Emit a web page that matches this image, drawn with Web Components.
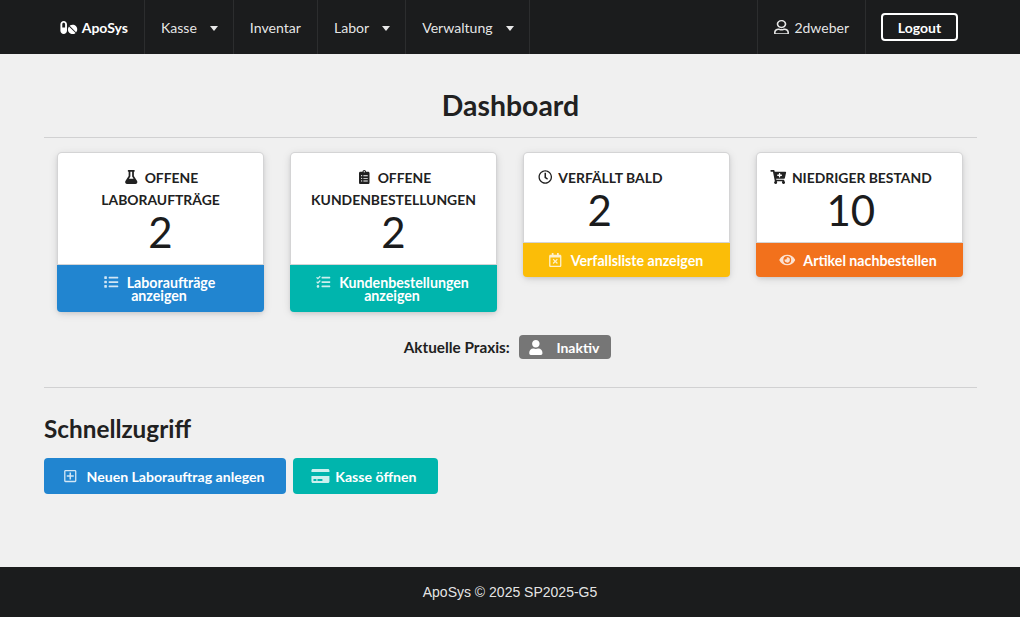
<!DOCTYPE html>
<html lang="de">
<head>
<meta charset="utf-8">
<title>ApoSys</title>
<style>
  html, body { margin: 0; height: 100%; }
  body { background: #f0f0f0; font-family: Lato, "Open Sans", sans-serif; font-size: 14.1px; color: #212121; }
  apo-app { display: flex; flex-direction: column; height: 617px; overflow: hidden; }
</style>
</head>
<body>
<apo-app>
  <apo-nav slot="nav"></apo-nav>
  <apo-dashboard></apo-dashboard>
  <apo-footer slot="footer">ApoSys © 2025 SP2025-G5</apo-footer>
</apo-app>

<script>
const ICONS = {
  pills: ["0 0 576 512", "M112 32C50.1 32 0 82.1 0 144v224c0 61.9 50.1 112 112 112s112-50.1 112-112V144c0-61.9-50.1-112-112-112zm48 224H64V144c0-26.5 21.5-48 48-48s48 21.5 48 48v112zm139.7-29.7c-3.5-3.5-9.4-3.1-12.3.8-45.3 62.5-40.4 150.1 15.9 206.4 56.3 56.3 143.9 61.2 206.4 15.9 4-2.9 4.3-8.8.8-12.3L299.7 226.3zm229.8-19c-56.3-56.3-143.9-61.2-206.4-15.9-4 2.9-4.3 8.8-.8 12.3l210.8 210.8c3.5 3.5 9.4 3.1 12.3-.8 45.3-62.6 40.5-150.1-15.9-206.4z"],
  flask: ["0 0 448 512", "M437.2 403.5L320 215V64h8c13.3 0 24-10.7 24-24V24c0-13.3-10.7-24-24-24H120c-13.3 0-24 10.7-24 24v16c0 13.3 10.7 24 24 24h8v151L10.8 403.5C-18.5 450.6 15.3 512 70.9 512h306.2c55.7 0 89.4-61.5 60.1-108.5zM137.9 320l48.2-77.6c3.7-5.2 5.8-11.6 5.8-18.4V64h64v160c0 6.9 2.2 13.2 5.8 18.4l48.2 77.6h-172z"],
  clipboard: ["0 0 384 512", "M336 64h-80c0-35.3-28.7-64-64-64s-64 28.7-64 64H48C21.5 64 0 85.5 0 112v352c0 26.5 21.5 48 48 48h288c26.5 0 48-21.5 48-48V112c0-26.5-21.5-48-48-48zM96 424c-13.3 0-24-10.7-24-24s10.7-24 24-24 24 10.7 24 24-10.7 24-24 24zm0-96c-13.3 0-24-10.7-24-24s10.7-24 24-24 24 10.7 24 24-10.7 24-24 24zm0-96c-13.3 0-24-10.7-24-24s10.7-24 24-24 24 10.7 24 24-10.7 24-24 24zm96-192c13.3 0 24 10.7 24 24s-10.7 24-24 24-24-10.7-24-24 10.7-24 24-24zm128 368c0 4.4-3.6 8-8 8H168c-4.4 0-8-3.6-8-8v-16c0-4.4 3.6-8 8-8h144c4.4 0 8 3.6 8 8v16zm0-96c0 4.4-3.6 8-8 8H168c-4.4 0-8-3.6-8-8v-16c0-4.4 3.6-8 8-8h144c4.4 0 8 3.6 8 8v16zm0-96c0 4.4-3.6 8-8 8H168c-4.4 0-8-3.6-8-8v-16c0-4.4 3.6-8 8-8h144c4.4 0 8 3.6 8 8v16z"],
  clock: ["0 0 512 512", "M256 8C119 8 8 119 8 256s111 248 248 248 248-111 248-248S393 8 256 8zm0 448c-110.5 0-200-89.5-200-200S145.5 56 256 56s200 89.5 200 200-89.5 200-200 200zm61.8-104.4l-84.9-61.7c-3.1-2.3-4.9-5.9-4.9-9.7V116c0-6.6 5.4-12 12-12h32c6.6 0 12 5.4 12 12v141.7l66.8 48.6c5.4 3.9 6.5 11.4 2.6 16.8L334.6 349c-3.9 5.3-11.4 6.5-16.8 2.6z"],
  cart: ["0 0 576 512", "M504.717 320H211.572l6.545 32h268.418c15.401 0 26.816 14.301 23.403 29.319l-5.517 24.276C523.112 414.668 536 433.828 536 456c0 31.202-25.519 56.444-56.824 55.994-29.823-.429-54.35-24.631-55.155-54.447-.44-16.287 6.085-31.049 16.803-41.548H231.176C241.553 426.165 248 440.326 248 456c0 31.813-26.528 57.431-58.67 55.938-28.54-1.325-51.751-24.385-53.251-52.917-1.158-22.034 10.436-41.455 28.051-51.586L93.883 64H24C10.745 64 0 53.255 0 40V24C0 10.745 10.745 0 24 0h102.529c11.401 0 21.228 8.021 23.513 19.19L159.208 64H551.99c15.401 0 26.816 14.301 23.403 29.319l-47.273 208C525.637 312.246 515.923 320 504.717 320zM408 168h-48v-40c0-8.837-7.163-16-16-16h-16c-8.837 0-16 7.163-16 16v40h-48c-8.837 0-16 7.163-16 16v16c0 8.837 7.163 16 16 16h48v40c0 8.837 7.163 16 16 16h16c8.837 0 16-7.163 16-16v-40h48c8.837 0 16-7.163 16-16v-16c0-8.837-7.163-16-16-16z"],
  list: ["0 0 512 512", "M80 368H16a16 16 0 0 0-16 16v64a16 16 0 0 0 16 16h64a16 16 0 0 0 16-16v-64a16 16 0 0 0-16-16zm0-320H16A16 16 0 0 0 0 64v64a16 16 0 0 0 16 16h64a16 16 0 0 0 16-16V64a16 16 0 0 0-16-16zm0 160H16a16 16 0 0 0-16 16v64a16 16 0 0 0 16 16h64a16 16 0 0 0 16-16v-64a16 16 0 0 0-16-16zm416 176H176a16 16 0 0 0-16 16v32a16 16 0 0 0 16 16h320a16 16 0 0 0 16-16v-32a16 16 0 0 0-16-16zm0-320H176a16 16 0 0 0-16 16v32a16 16 0 0 0 16 16h320a16 16 0 0 0 16-16V80a16 16 0 0 0-16-16zm0 160H176a16 16 0 0 0-16 16v32a16 16 0 0 0 16 16h320a16 16 0 0 0 16-16v-32a16 16 0 0 0-16-16z"],
  tasks: ["0 0 512 512", "M139.61 35.5a12 12 0 0 0-17 0L58.93 98.81l-22.7-22.12a12 12 0 0 0-17 0L3.53 92.41a12 12 0 0 0 0 17l47.59 47.4a12.78 12.78 0 0 0 17.61 0l15.59-15.62L156.52 69a12.09 12.09 0 0 0 .09-17zm0 159.19a12 12 0 0 0-17 0l-63.68 63.72-22.7-22.1a12 12 0 0 0-17 0L3.53 252a12 12 0 0 0 0 17L51 316.5a12.77 12.77 0 0 0 17.6 0l15.7-15.69 72.2-72.22a12 12 0 0 0 .09-16.9zM64 368c-26.49 0-48.59 21.5-48.59 48S37.53 464 64 464a48 48 0 0 0 0-96zm432 16H208a16 16 0 0 0-16 16v32a16 16 0 0 0 16 16h288a16 16 0 0 0 16-16v-32a16 16 0 0 0-16-16zm0-320H208a16 16 0 0 0-16 16v32a16 16 0 0 0 16 16h288a16 16 0 0 0 16-16V80a16 16 0 0 0-16-16zm0 160H208a16 16 0 0 0-16 16v32a16 16 0 0 0 16 16h288a16 16 0 0 0 16-16v-32a16 16 0 0 0-16-16z"],
  calendar: ["0 0 448 512", "M311.7 374.7l-17 17c-4.7 4.7-12.3 4.7-17 0L224 337.9l-53.7 53.7c-4.7 4.7-12.3 4.7-17 0l-17-17c-4.7-4.7-4.7-12.3 0-17l53.7-53.7-53.7-53.7c-4.7-4.7-4.7-12.3 0-17l17-17c4.7-4.7 12.3-4.7 17 0l53.7 53.7 53.7-53.7c4.7-4.7 12.3-4.7 17 0l17 17c4.7 4.7 4.7 12.3 0 17L257.9 304l53.7 53.7c4.8 4.7 4.8 12.3.1 17zM448 112v352c0 26.5-21.5 48-48 48H48c-26.5 0-48-21.5-48-48V112c0-26.5 21.5-48 48-48h48V12c0-6.6 5.4-12 12-12h40c6.6 0 12 5.4 12 12v52h128V12c0-6.6 5.4-12 12-12h40c6.6 0 12 5.4 12 12v52h48c26.5 0 48 21.5 48 48zm-48 346V160H48v298c0 3.3 2.7 6 6 6h340c3.3 0 6-2.7 6-6z"],
  eye: ["0 0 576 512", "M572.52 241.4C518.29 135.59 410.93 64 288 64S57.68 135.64 3.48 241.41a32.35 32.35 0 0 0 0 29.19C57.71 376.41 165.07 448 288 448s230.32-71.64 284.52-177.41a32.35 32.35 0 0 0 0-29.19zM288 400a144 144 0 1 1 144-144 143.93 143.93 0 0 1-144 144zm0-240a95.31 95.31 0 0 0-25.31 3.79 47.85 47.85 0 0 1-66.9 66.9A95.78 95.78 0 1 0 288 160z"],
  user: ["0 0 448 512", "M224 256c70.7 0 128-57.3 128-128S294.7 0 224 0 96 57.3 96 128s57.3 128 128 128zm89.6 32h-16.7c-22.2 10.2-46.9 16-72.9 16s-50.6-5.8-72.9-16h-16.7C60.2 288 0 348.2 0 422.4V464c0 26.5 21.5 48 48 48h352c26.5 0 48-21.5 48-48v-41.6c0-74.2-60.2-134.4-134.4-134.4z"],
  userOutline: ["0 0 448 512", "M313.6 304c-28.7 0-42.5 16-89.6 16-47.1 0-60.8-16-89.6-16C60.2 304 0 364.2 0 438.4V464c0 26.5 21.5 48 48 48h352c26.5 0 48-21.5 48-48v-25.6c0-74.2-60.2-134.4-134.4-134.4zM400 464H48v-25.6c0-47.6 38.8-86.4 86.4-86.4 14.6 0 38.3 16 89.6 16 51.7 0 74.9-16 89.6-16 47.6 0 86.4 38.8 86.4 86.4V464zM224 288c79.5 0 144-64.5 144-144S303.5 0 224 0 80 64.5 80 144s64.5 144 144 144zm0-240c52.9 0 96 43.1 96 96s-43.1 96-96 96-96-43.1-96-96 43.1-96 96-96z"],
  plusSquare: ["0 0 448 512", "M352 240v32c0 6.6-5.4 12-12 12h-88v88c0 6.6-5.4 12-12 12h-32c-6.6 0-12-5.4-12-12v-88h-88c-6.6 0-12-5.4-12-12v-32c0-6.6 5.4-12 12-12h88v-88c0-6.6 5.4-12 12-12h32c6.6 0 12 5.4 12 12v88h88c6.6 0 12 5.4 12 12zm96-160v352c0 26.5-21.5 48-48 48H48c-26.5 0-48-21.5-48-48V80c0-26.5 21.5-48 48-48h352c26.5 0 48 21.5 48 48zm-48 346V86c0-3.3-2.7-6-6-6H54c-3.3 0-6 2.7-6 6v340c0 3.3 2.7 6 6 6h340c3.3 0 6-2.7 6-6z"],
  card: ["0 0 576 512", "M0 432c0 26.5 21.5 48 48 48h480c26.5 0 48-21.5 48-48V256H0v176zm192-68c0-6.6 5.4-12 12-12h136c6.6 0 12 5.4 12 12v40c0 6.6-5.4 12-12 12H204c-6.6 0-12-5.4-12-12v-40zm-128 0c0-6.6 5.4-12 12-12h72c6.6 0 12 5.4 12 12v40c0 6.6-5.4 12-12 12H76c-6.6 0-12-5.4-12-12v-40zM576 80v48H0V80c0-26.5 21.5-48 48-48h480c26.5 0 48 21.5 48 48z"],
};

// same box for every icon, like the icon font: 1.18em wide, glyph centred
class ApoIcon extends HTMLElement {
  connectedCallback() {
    const [box, d] = ICONS[this.getAttribute("name")];
    const size = this.getAttribute("size") || 14;
    const op = this.getAttribute("opacity") || 1;
    const fit = this.hasAttribute("stretch") ? "none" : "xMidYMid meet";
    this.attachShadow({ mode: "open" }).innerHTML = `
      <style>
        :host { display: inline-block; width: 1.18em; height: 1em; line-height: 1; vertical-align: -1px; font-size: ${size}px; opacity: ${op}; }
        svg { display: block; width: 100%; height: 100%; fill: currentColor; }
      </style>
      <svg viewBox="${box}" preserveAspectRatio="${fit}"><path d="${d}"/></svg>`;
  }
}
customElements.define("apo-icon", ApoIcon);

class ApoApp extends HTMLElement {
  constructor() {
    super();
    this.attachShadow({ mode: "open" }).innerHTML = `
      <style>:host { display: flex; flex-direction: column; }</style>
      <slot name="nav"></slot><slot></slot><slot name="footer"></slot>`;
  }
}
customElements.define("apo-app", ApoApp);

class ApoNavItem extends HTMLElement {
  constructor() {
    super();
    this.attachShadow({ mode: "open" }).innerHTML = `
      <style>
        :host { display: flex; align-items: center; padding: 0 16px; height: 54px; box-sizing: border-box; color: rgba(255,255,255,.9); border-right: 1px solid rgba(255,255,255,.08); white-space: nowrap; }
        .caret { width: 0; height: 0; margin-left: 13px; margin-right: -1px; margin-top: 3px; border: 4.5px solid transparent; border-top: 5px solid currentColor; border-bottom: 0; }
      </style>
      <slot></slot>${this.hasAttribute("dropdown") ? '<span class="caret"></span>' : ""}`;
  }
}
customElements.define("apo-nav-item", ApoNavItem);

class ApoNav extends HTMLElement {
  constructor() {
    super();
    this.attachShadow({ mode: "open" }).innerHTML = `
      <style>
        :host { display: block; background: #1b1c1d; flex: none; font-size: 14.1px; }
        nav { display: flex; height: 54px; padding: 0 46px 0 44px; box-sizing: border-box; }
        .brand { font-weight: 700; font-size: 14px; color: #fff; }
        .brand apo-icon { margin-right: 4px; }
        .right { margin-left: auto; display: flex; align-items: center; }
        .user { border-left: 1px solid rgba(255,255,255,.08); margin-right: 15px; font-size: 14px; }
        .user apo-icon { width: 15px; height: 14.5px; margin-right: 5.5px; }
        .logout { width: 77px; height: 28px; box-sizing: border-box; display: flex; align-items: center; justify-content: center; border: 2px solid #fff; border-radius: 4px; color: #fff; font-weight: 700; font-size: 14px; margin-right: 16px; }
      </style>
      <nav>
        <apo-nav-item class="brand"><apo-icon name="pills" size="15"></apo-icon>ApoSys</apo-nav-item>
        <apo-nav-item dropdown>Kasse</apo-nav-item>
        <apo-nav-item>Inventar</apo-nav-item>
        <apo-nav-item dropdown>Labor</apo-nav-item>
        <apo-nav-item dropdown>Verwaltung</apo-nav-item>
        <div class="right">
          <apo-nav-item class="user"><apo-icon name="userOutline" stretch></apo-icon>2dweber</apo-nav-item>
          <div class="logout">Logout</div>
        </div>
      </nav>`;
  }
}
customElements.define("apo-nav", ApoNav);

class ApoStatCard extends HTMLElement {
  constructor() {
    super();
    const a = n => this.getAttribute(n);
    this.attachShadow({ mode: "open" }).innerHTML = `
      <style>
        :host { display: block; flex: 0 0 205px; background: #fff; border-radius: 4px; box-shadow: 0 0 0 1px #d4d4d5, 0 2px 4px 0 rgba(34,36,38,.12), 0 2px 10px 0 rgba(34,36,38,.15); }
        .content { display: flex; flex-direction: column; align-items: flex-start; padding: 14px 13px 11px; }
        .inner { text-align: center; }
        .title { font-weight: 700; font-size: 13.9px; line-height: 22px; text-transform: uppercase; color: #212121; }
        .title apo-icon { margin-right: 2px; }
        .value { font-size: 42px; line-height: 42px; color: #1b1c1d; }
        .extra { display: block; margin: 0 -1px -1px; padding: 10px 23px 10px 20px; border-radius: 0 0 4px 4px; background: var(--c); background-clip: padding-box; color: #fff; font-weight: 700; font-size: 14.2px; line-height: 13px; text-align: center; border-top: 1px solid #d4d4d5; box-sizing: border-box; }
        .extra apo-icon { margin-right: 7.5px; }
      </style>
      <div class="content"><div class="inner">
        <div class="title"><apo-icon name="${a("icon")}"></apo-icon> ${a("title")}</div>
        <div class="value">${a("value")}</div>
      </div></div>
      <div class="extra" style="--c:${a("color")}"><apo-icon name="${a("link-icon")}" opacity=".8"></apo-icon>${a("link")}</div>`;
  }
}
customElements.define("apo-stat-card", ApoStatCard);

class ApoButton extends HTMLElement {
  constructor() {
    super();
    const size = this.getAttribute("icon-size") || 14;
    const gap = this.getAttribute("gap") || 7;
    this.attachShadow({ mode: "open" }).innerHTML = `
      <style>
        :host { display: inline-flex; align-items: center; height: 36px; padding: 0 22px 0 18px; box-sizing: border-box; border-radius: 4px; background: var(--c); color: #fff; font-weight: 700; font-size: 14.1px; white-space: nowrap; }
        apo-icon { margin-right: ${gap}px; }
      </style>
      <apo-icon name="${this.getAttribute("icon")}" size="${size}" opacity=".8"></apo-icon><slot></slot>`;
  }
}
customElements.define("apo-button", ApoButton);

class ApoDashboard extends HTMLElement {
  constructor() {
    super();
    this.attachShadow({ mode: "open" }).innerHTML = `
      <style>
        :host { display: block; flex: 1 1 auto; padding: 0 43px 0 44px; }
        h1 { margin: 0; padding-top: 34px; height: 84px; box-sizing: border-box; font-size: 28.4px; line-height: 35px; font-weight: 700; text-align: center; color: #212121; border-bottom: 1px solid rgba(34,36,38,.15); }
        .cards { display: flex; align-items: flex-start; gap: 28px; padding: 15px 14px 0; }
        .praxis { display: flex; justify-content: center; align-items: center; gap: 9px; margin-top: 24px; padding-right: 6px; font-weight: 700; font-size: 15.3px; }
        .label { display: inline-flex; align-items: center; height: 24px; padding: 0 12px 0 8px; background: #767676; border-radius: 4px; color: #fff; font-size: 14px; }
        .label apo-icon { margin-right: 12px; }
        hr { margin: 28px 0 0; border: 0; border-top: 1px solid rgba(34,36,38,.15); }
        h2 { margin: 26px 0 0; font-size: 24.3px; line-height: 30px; font-weight: 700; color: #212121; }
        .quick { display: flex; gap: 7px; margin-top: 14px; }
      </style>
      <h1>Dashboard</h1>
      <div class="cards">
        <apo-stat-card icon="flask" title="Offene Laboraufträge" value="2" color="#2185d0" link-icon="list" link="Laboraufträge anzeigen"></apo-stat-card>
        <apo-stat-card icon="clipboard" title="Offene Kundenbestellungen" value="2" color="#00b5ad" link-icon="tasks" link="Kundenbestellungen anzeigen"></apo-stat-card>
        <apo-stat-card icon="clock" title="Verfällt bald" value="2" color="#fbbd08" link-icon="calendar" link="Verfallsliste anzeigen"></apo-stat-card>
        <apo-stat-card icon="cart" title="Niedriger Bestand" value="10" color="#f2711c" link-icon="eye" link="Artikel nachbestellen"></apo-stat-card>
      </div>
      <div class="praxis">
        <span>Aktuelle Praxis:</span>
        <span class="label"><apo-icon name="user" size="15"></apo-icon>Inaktiv</span>
      </div>
      <hr>
      <h2>Schnellzugriff</h2>
      <div class="quick">
        <apo-button icon="plusSquare" gap="8" style="--c:#2185d0">Neuen Laborauftrag anlegen</apo-button>
        <apo-button icon="card" icon-size="16" gap="5" style="--c:#00b5ad">Kasse öffnen</apo-button>
      </div>`;
  }
}
customElements.define("apo-dashboard", ApoDashboard);

class ApoFooter extends HTMLElement {
  constructor() {
    super();
    this.attachShadow({ mode: "open" }).innerHTML = `
      <style>
        :host { display: flex; flex: none; height: 50px; align-items: center; justify-content: center; background: #1b1c1d; color: rgba(255,255,255,.9); font-family: "Liberation Sans", Arial, sans-serif; font-size: 14px; }
      </style>
      <slot></slot>`;
  }
}
customElements.define("apo-footer", ApoFooter);
</script>
</body>
</html>
